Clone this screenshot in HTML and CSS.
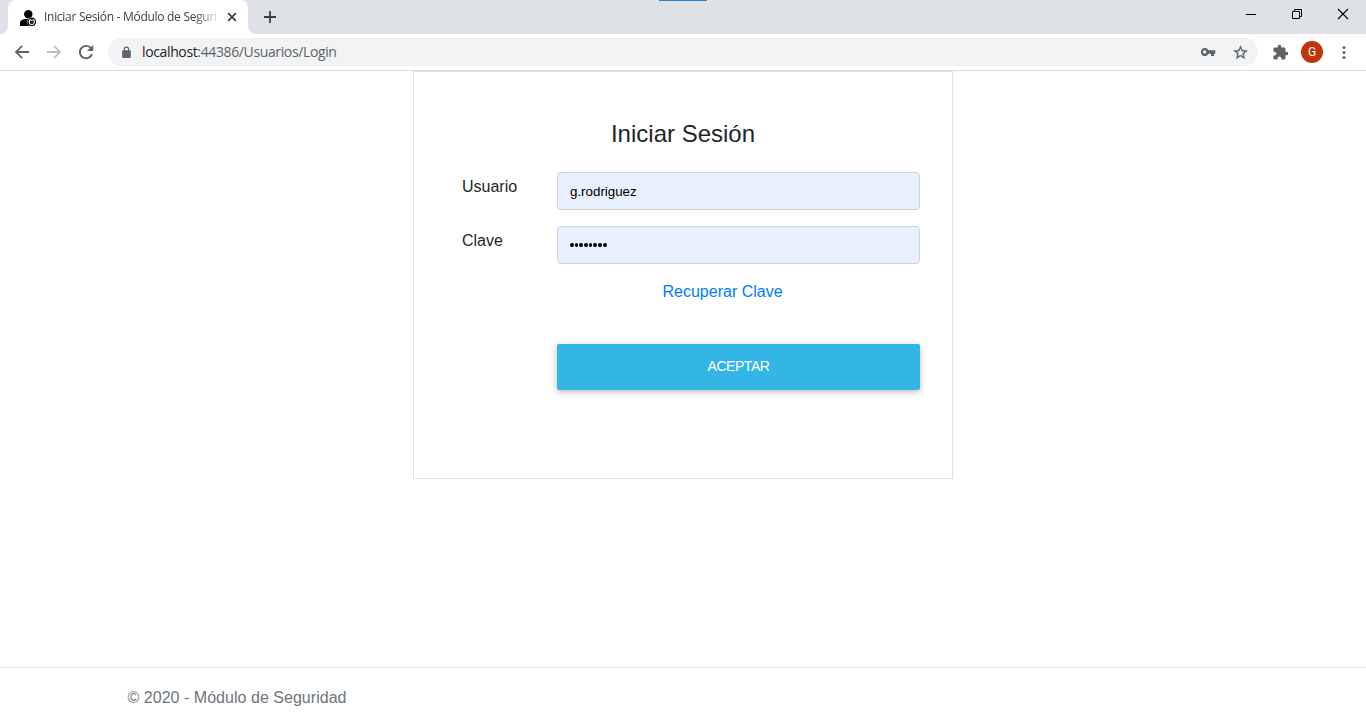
FILE: index.html
```html
<!DOCTYPE html>
<html lang="es">
<head>
<meta charset="utf-8">
<title>Iniciar Sesión - Módulo de Seguridad</title>
<link rel="stylesheet" href="styles.css">
</head>
<body>
<header class="browser">
  <div class="tabstrip">
    <div class="screen-bar"><span class="screen-bar-active"></span></div>
    <div class="tab">
      <svg class="favicon" width="16" height="16" viewBox="0 0 16 16"><circle cx="8.300" cy="4.300" r="4.200"/><path d="M0 16v-3.500C0 10.500 2 9.400 5 9h6l4 2v5z"/><circle cx="11.800" cy="11.800" r="4.600" fill="#fff"/><circle cx="11.800" cy="11.800" r="3.700" fill="#fff" stroke="#000" stroke-width="1.200"/><path d="M10.700 11.500v-1a1.100 1.100 0 0 1 2.200 0v1" fill="none" stroke="#000" stroke-width=".9"/><path d="M10 11.200h3.600v2.500H10z"/></svg>
      <span class="tab-title">Iniciar Sesión - Módulo de Seguri</span>
      <svg class="tab-close" width="10" height="10" viewBox="0 0 10 10"><path d="M1.200 1.200l7.600 7.600M8.800 1.200L1.200 8.800" stroke="#3c4043" stroke-width="1.700"/></svg>
    </div>
    <svg class="new-tab" width="14" height="14" viewBox="0 0 14 14"><path d="M7 1v12M1 7h12" stroke="#3c4043" stroke-width="1.800"/></svg>
    <div class="window-controls">
      <svg width="12" height="12" viewBox="0 0 12 12"><path d="M1 6.500h10" stroke="#000"/></svg>
      <svg width="12" height="12" viewBox="0 0 12 12"><path d="M1.500 3.500h7v7h-7zM3.500 3.500v-2h7v7h-2" fill="none" stroke="#000"/></svg>
      <svg width="12" height="12" viewBox="0 0 12 12"><path d="M1 1l10 10M11 1L1 11" stroke="#000" stroke-width="1.100"/></svg>
    </div>
  </div>
  <div class="toolbar">
    <div class="nav">
      <svg width="20" height="20" viewBox="0 0 24 24" fill="#5f6368"><path d="M20.500 10.900H7.400l5.500-5.500L11.400 3.900 3.300 12l8.100 8.100 1.500-1.500-5.500-5.500h13.100z"/></svg>
      <svg width="20" height="20" viewBox="0 0 24 24" fill="#babcbe"><path d="M3.500 10.900h13.100l-5.500-5.500 1.500-1.500 8.100 8.100-8.100 8.100-1.500-1.500 5.500-5.500H3.500z"/></svg>
      <svg width="20" height="20" viewBox="0 0 24 24" fill="#5f6368"><path d="M18.100 5.900A8.600 8.600 0 1 0 20.400 14.300h-2.400A6.300 6.300 0 1 1 16.500 7.500L13.300 10.700h7.300V3.400z"/></svg>
    </div>
    <div class="omnibox">
      <svg class="lock" width="13" height="13" viewBox="0 0 24 24" fill="#5f6368"><path d="M18 8h-1V6A5 5 0 0 0 7 6v2H6a2 2 0 0 0-2 2v10c0 1.100.9 2 2 2h12a2 2 0 0 0 2-2V10a2 2 0 0 0-2-2zM9 8V6a3 3 0 0 1 6 0v2z"/></svg>
      <span class="url"><b>localhost</b>:44386/Usuarios/Login</span>
      <svg class="key" width="16" height="16" viewBox="0 0 24 24" fill="#5f6368"><path fill-rule="evenodd" d="M12.650 9.500A6 6 0 1 0 12.650 14.500H16.500V18H21v-3.500h2v-5zM7 14.500a2.500 2.500 0 1 1 0-5 2.500 2.500 0 0 1 0 5z"/></svg>
      <svg class="star" width="17" height="17" viewBox="0 0 24 24" fill="#5f6368"><path stroke="#5f6368" stroke-width=".4" d="M22 9.240l-7.190-.62L12 2 9.190 8.630 2 9.240l5.460 4.730L5.820 21 12 17.270 18.180 21l-1.630-7.030zM12 15.400l-3.760 2.270 1-4.280-3.320-2.880 4.380-.38L12 6.100l1.710 4.040 4.380.38-3.320 2.880 1 4.280z"/></svg>
    </div>
    <svg class="puzzle" width="17" height="17" viewBox="0 0 24 24" fill="#5f6368"><path d="M20.500 11H19V7a2 2 0 0 0-2-2h-4V3.500a2.500 2.500 0 0 0-5 0V5H4a2 2 0 0 0-2 2v3.800h1.500a2.700 2.700 0 0 1 0 5.400H2V20c0 1.100.9 2 2 2h3.800v-1.500a2.700 2.700 0 0 1 5.400 0V22H17a2 2 0 0 0 2-2v-4h1.500a2.500 2.500 0 0 0 0-5z"/></svg>
    <span class="avatar">G</span>
    <svg class="dots" width="4" height="14" viewBox="0 0 4 14" fill="#5f6368"><circle cx="2" cy="2.500" r="1.500"/><circle cx="2" cy="7.500" r="1.500"/><circle cx="2" cy="12.500" r="1.500"/></svg>
  </div>
</header>
<main class="page">
  <form class="card">
    <h1 class="title">Iniciar Sesión</h1>
    <div class="row"><label class="label" for="user">Usuario</label><input class="field" id="user" type="text" value="g.rodriguez"></div>
    <div class="row"><label class="label">Clave</label><div class="field dotted"><span></span><span></span><span></span><span></span><span></span><span></span><span></span><span></span></div></div>
    <a class="recover">Recuperar Clave</a>
    <button class="accept" type="button">ACEPTAR</button>
  </form>
</main>
<footer class="footer">© 2020 - Módulo de Seguridad</footer>
</body>
</html>
```
FILE: styles.css
```css
* { box-sizing: border-box; }
body {
  margin: 0;
  height: 728px;
  overflow: hidden;
  display: flex;
  flex-direction: column;
  background: #fff;
  color: #212529;
  font: 16px/24px "Liberation Sans", Arial, sans-serif;
}
svg { display: block; flex: none; }
.browser { height: 71px; border-bottom: 1px solid #dadce0; font-family: "Open Sans", "Noto Sans", sans-serif; }
.tabstrip { position: relative; display: flex; height: 34px; padding-left: 8px; background: #dee1e6; }
.screen-bar { position: absolute; top: 0; left: 563px; width: 241px; height: 1px; background: #e3e3e3; }
.screen-bar-active { display: block; width: 48px; height: 1px; margin-left: 96px; background: #2488d0; }
.tab {
  position: relative;
  display: flex;
  align-items: center;
  width: 240px;
  padding: 0 11px 0 12px;
  border-radius: 8px 8px 0 0;
  background: #fff;
}
.tab::before, .tab::after { content: ""; position: absolute; bottom: 0; width: 8px; height: 8px; }
.tab::before { left: -8px; background: radial-gradient(circle at 0 0, transparent 7.5px, #fff 8.5px); }
.tab::after { right: -8px; background: radial-gradient(circle at 100% 0, transparent 7.5px, #fff 8.5px); }
.favicon { margin-top: 1px; }
.tab-title {
  width: 176px;
  margin-left: 8px;
  white-space: nowrap;
  font-size: 12px;
  letter-spacing: -0.29px;
  color: #3c4043;
  -webkit-mask-image: linear-gradient(90deg, #000 150px, transparent 178px);
  mask-image: linear-gradient(90deg, #000 150px, transparent 178px);
}
.tab-close { margin-left: 7px; }
.new-tab { margin: 10px 0 0 15px; }
.window-controls { display: flex; gap: 34px; margin: 8px 17px 0 auto; }
.toolbar { display: flex; align-items: center; height: 36px; padding-left: 12px; }
.nav { display: flex; gap: 12px; }
.omnibox {
  display: flex;
  align-items: center;
  width: 1150px;
  height: 28px;
  margin-left: 12px;
  padding: 0 9px 0 12px;
  border-radius: 14px;
  background: #f1f3f4;
}
.url { margin-left: 9px; font-size: 14px; letter-spacing: -0.37px; color: #5f6368; }
.url b { font-weight: 400; color: #202124; }
.key { margin-left: auto; }
.star { margin-left: 16px; }
.puzzle { margin-left: 14px; }
.avatar { width: 22px; height: 22px; margin-left: 12px; border-radius: 50%; background: #bf360c; color: #fff; font: 12px/22px Roboto, sans-serif; text-align: center; }
.dots { margin-left: 19px; }
.page { flex: 1; }
.card {
  display: flex;
  flex-direction: column;
  width: 540px;
  height: 408px;
  margin: 0 auto;
  padding: 47px 32px 0 48px;
  border: 1px solid #dee2e6;
}
.title { margin: 0 16px 24px 0; font-size: 24px; line-height: 29px; font-weight: 400; text-align: center; }
.row { display: flex; height: 38px; margin-bottom: 16px; }
.label { width: 95px; padding-top: 3px; }
.field {
  width: 363px;
  height: 38px;
  padding: 0 12px;
  border: 1px solid #ced4da;
  border-radius: 4px;
  background: #e8f0fe;
  color: #000;
  font: 13.333px "Liberation Sans", Arial, sans-serif;
}
.dotted { display: flex; align-items: center; gap: 1px; }
.dotted span { width: 3.7px; height: 4px; border-radius: 50%; background: #000; }
.recover { margin-left: 200.5px; color: #007bff; }
.accept {
  height: 46px;
  margin: 40px 0 0 95px;
  padding: 0 0 2px;
  border: 0;
  border-radius: 2px;
  background: #33b5e5;
  box-shadow: 0 2px 5px rgba(0,0,0,.16), 0 2px 10px rgba(0,0,0,.12);
  color: #fff;
  font: 14px "Liberation Sans", Arial, sans-serif;
  letter-spacing: -0.45px;
}
.footer { height: 61px; padding-left: 127.5px; border-top: 1px solid #dee2e6; line-height: 60px; letter-spacing: 0.03px; color: #6c757d; }
```
